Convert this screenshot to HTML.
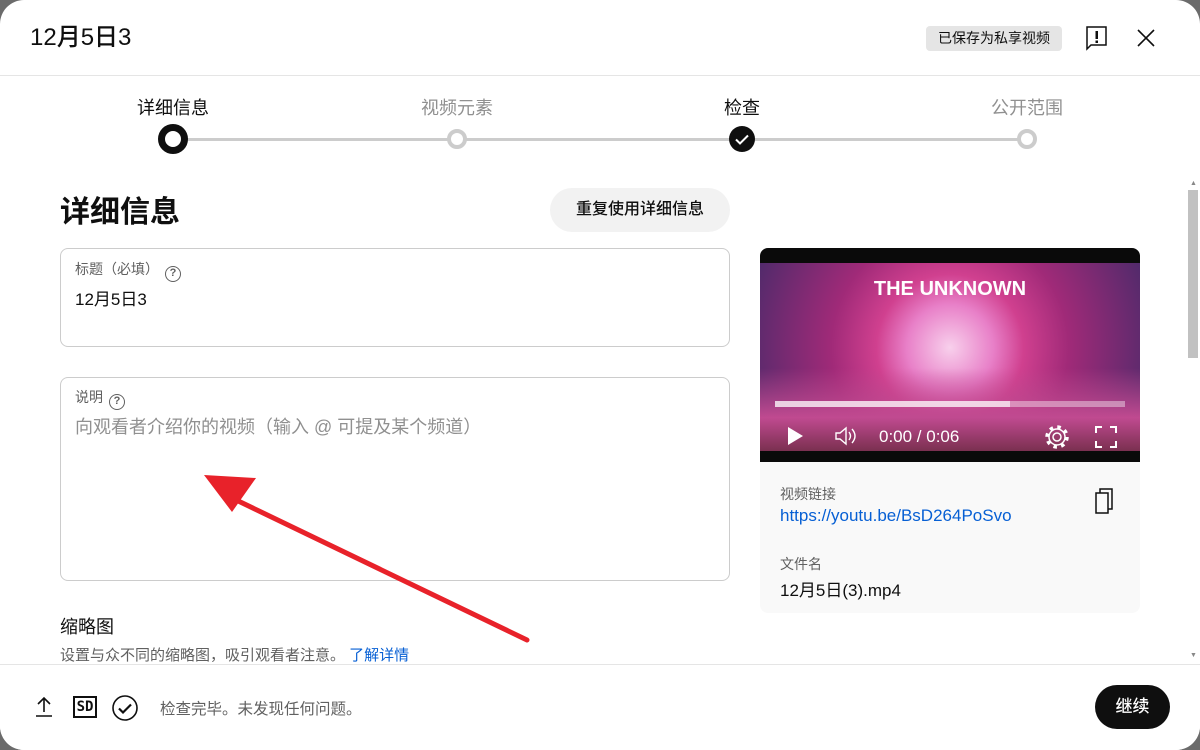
<!DOCTYPE html>
<html><head><meta charset="utf-8"><style>
*{box-sizing:border-box;margin:0;padding:0}
body{width:1200px;height:750px;background:#6b6b6b;font-family:"Liberation Sans","Noto Sans CJK SC",sans-serif;color:#0f0f0f;overflow:hidden;position:relative}
.dlg{position:absolute;left:0;top:0;width:1200px;height:750px;background:#fff;border-radius:24px;overflow:hidden}
.abs{position:absolute}
.hdr{height:76px;border-bottom:1px solid #e5e5e5}
.field{position:absolute;left:60px;width:670px;border:1px solid #ccc;border-radius:8px}
.lbl{font-size:14px;color:#606060}
.q{display:inline-block;width:16px;height:16px;border:1.5px solid #606060;border-radius:50%;font-size:11px;text-align:center;line-height:13px;margin-left:6px;vertical-align:-2px;color:#606060;font-weight:bold}
</style></head><body>
<div class="dlg">
<div class="hdr"></div>
<div class="abs" style="left:30px;top:23px;font-size:24px;font-weight:500;color:#0f0f0f;line-height:30px">12月5日3</div>
<div class="abs" style="left:926px;top:26px;width:136px;height:25px;background:#e5e5e5;border-radius:4px;font-size:14px;text-align:center;line-height:25px;color:#0f0f0f">已保存为私享视频</div>
<svg class="abs" style="left:1085px;top:25px" width="24" height="26" viewBox="0 0 24 26"><path d="M2 2h19v18H6l-4 4z" fill="none" stroke="#0f0f0f" stroke-width="1.5"/><rect x="10.5" y="6" width="2.5" height="8" fill="#0f0f0f"/><rect x="10.5" y="15.5" width="2.5" height="2.5" fill="#0f0f0f"/></svg>
<svg class="abs" style="left:1136px;top:28px" width="20" height="20"><path d="M2 2L18 18M18 2L2 18" stroke="#0f0f0f" stroke-width="1.6"/></svg>

<!-- stepper -->
<div class="abs" style="left:173px;top:138px;width:854px;height:3px;background:#ccc"></div>
<div class="abs" style="left:133px;top:94px;width:80px;text-align:center;font-size:18px;color:#0f0f0f">详细信息</div>
<div class="abs" style="left:417px;top:94px;width:80px;text-align:center;font-size:18px;color:#909090">视频元素</div>
<div class="abs" style="left:702px;top:94px;width:80px;text-align:center;font-size:18px;color:#0f0f0f">检查</div>
<div class="abs" style="left:987px;top:94px;width:80px;text-align:center;font-size:18px;color:#909090">公开范围</div>
<div class="abs" style="left:158px;top:124px;width:30px;height:30px;border-radius:50%;border:7px solid #0f0f0f;background:#fff"></div>
<div class="abs" style="left:447px;top:129px;width:20px;height:20px;border-radius:50%;border:4px solid #ccc;background:#fff"></div>
<div class="abs" style="left:1017px;top:129px;width:20px;height:20px;border-radius:50%;border:4px solid #ccc;background:#fff"></div>
<svg class="abs" style="left:729px;top:126px" width="26" height="26"><circle cx="13" cy="13" r="13" fill="#0f0f0f"/><path d="M7 13.5l4 4 8-8" stroke="#fff" stroke-width="2" fill="none"/></svg>

<!-- scrollbar -->
<div class="abs" style="left:1188px;top:190px;width:10px;height:168px;background:#c1c1c1"></div>
<div class="abs" style="left:1190px;top:180px;font-size:7px;color:#888">▲</div>
<div class="abs" style="left:1190px;top:652px;font-size:7px;color:#888">▼</div>

<div class="abs" style="left:60px;top:187px;font-size:30px;font-weight:bold">详细信息</div>
<div class="abs" style="left:550px;top:188px;width:180px;height:44px;border-radius:22px;background:#f2f2f2;font-size:16px;font-weight:500;text-align:center;line-height:44px">重复使用详细信息</div>

<div class="field" style="top:248px;height:99px">
<div class="lbl abs" style="left:14px;top:10px">标题（必填）<span class="q">?</span></div>
<div class="abs" style="left:14px;top:36px;font-size:17px">12月5日3</div>
</div>
<div class="field" style="top:377px;height:204px">
<div class="lbl abs" style="left:14px;top:9px">说明<span class="q">?</span></div>
<div class="abs" style="left:14px;top:35px;font-size:18px;color:#909090">向观看者介绍你的视频（输入 @ 可提及某个频道）</div>
</div>

<div class="abs" style="left:60px;top:613px;font-size:18px">缩略图</div>
<div class="abs" style="left:60px;top:644px;font-size:15px;color:#606060">设置与众不同的缩略图，吸引观看者注意。 <span style="color:#065fd4">了解详情</span></div>

<!-- video card -->
<div class="abs" style="left:760px;top:248px;width:380px;height:365px;background:#f9f9f9;border-radius:8px;overflow:hidden">
<div style="height:214px;background:#0a0a0a;position:relative">
<div class="abs" style="left:0;top:15px;width:380px;height:188px;background:radial-gradient(circle at 50% 45%,#f8d0ec 0,#e880c8 20%,#d0408f 34%,#a02a78 55%,#4a2a6a 100%)"></div>
<div class="abs" style="left:0;top:120px;width:380px;height:83px;background:linear-gradient(rgba(200,60,130,0),#c04a90 60%,#7a3050)"></div>
<div class="abs" style="left:0;top:30px;width:380px;text-align:center;color:#fff;font-weight:bold;font-size:20px">THE UNKNOWN</div>
<div class="abs" style="left:15px;top:153px;width:350px;height:6px;background:rgba(255,255,255,.4)"></div>
<div class="abs" style="left:15px;top:153px;width:235px;height:6px;background:rgba(255,255,255,.6)"></div>
<svg class="abs" style="left:26px;top:178px" width="18" height="20"><path d="M2 1l15 9-15 9z" fill="#fff"/></svg>
<svg class="abs" style="left:74px;top:178px" width="24" height="20"><path d="M2 7h4l6-5v16l-6-5H2z M15 6q3 4 0 8 M18 3q6 7 0 14" fill="none" stroke="#fff" stroke-width="1.4"/></svg>
<div class="abs" style="left:119px;top:179px;color:#fff;font-size:17px">0:00 / 0:06</div>
<svg class="abs" style="left:284px;top:176px" width="26" height="26" viewBox="0 0 26 26"><circle cx="13" cy="13" r="4" fill="none" stroke="#fff" stroke-width="1.5"/><circle cx="13" cy="13" r="8" fill="none" stroke="#fff" stroke-width="1.5"/><circle cx="13" cy="13" r="10" fill="none" stroke="#fff" stroke-width="3.5" stroke-dasharray="3.5 4.35"/></svg>
<svg class="abs" style="left:335px;top:178px" width="22" height="22"><path d="M1 7V1h6M15 1h6v6M21 15v6h-6M7 21H1v-6" fill="none" stroke="#fff" stroke-width="2"/></svg>
</div>
<div class="abs" style="left:20px;top:236px;font-size:14px;color:#606060">视频链接</div>
<div class="abs" style="left:20px;top:258px;font-size:17px;color:#065fd4">https://youtu.be/BsD264PoSvo</div>
<svg class="abs" style="left:335px;top:240px" width="22" height="28"><path d="M1 5h12v20H1z" fill="none" stroke="#0f0f0f" stroke-width="1.5"/><path d="M5 5V1h12v20h-4" fill="none" stroke="#0f0f0f" stroke-width="1.5"/></svg>
<div class="abs" style="left:20px;top:306px;font-size:14px;color:#606060">文件名</div>
<div class="abs" style="left:20px;top:328px;font-size:17px">12月5日(3).mp4</div>
</div>

<!-- arrow -->
<svg class="abs" style="left:0;top:0" width="1200" height="750"><path d="M527 640L232 498" stroke="#e8222a" stroke-width="5" stroke-linecap="round"/><path d="M204 475L256 478L232 512z" fill="#e8222a"/></svg>

<!-- footer -->
<div class="abs" style="left:0;top:664px;width:1200px;height:86px;border-top:1px solid #e5e5e5;background:#fff"></div>
<svg class="abs" style="left:34px;top:696px" width="20" height="22"><path d="M10 2v14M4 8l6-6 6 6M2 20h16" fill="none" stroke="#0f0f0f" stroke-width="1.6"/></svg>
<div class="abs" style="left:73px;top:696px;width:24px;height:22px;border:2px solid #0f0f0f;font-size:14px;font-weight:bold;font-family:'DejaVu Sans Mono',monospace;text-align:center;line-height:18px">SD</div>
<svg class="abs" style="left:111px;top:694px" width="28" height="28"><circle cx="14" cy="14" r="12" fill="none" stroke="#0f0f0f" stroke-width="1.6"/><path d="M8 14.5l4 4 8-8" fill="none" stroke="#0f0f0f" stroke-width="2.2"/></svg>
<div class="abs" style="left:160px;top:697px;font-size:15.5px;color:#606060">检查完毕。未发现任何问题。</div>
<div class="abs" style="left:1095px;top:685px;width:75px;height:44px;border-radius:22px;background:#0f0f0f;color:#fff;font-size:17px;font-weight:500;text-align:center;line-height:44px">继续</div>
</div>
</body></html>
